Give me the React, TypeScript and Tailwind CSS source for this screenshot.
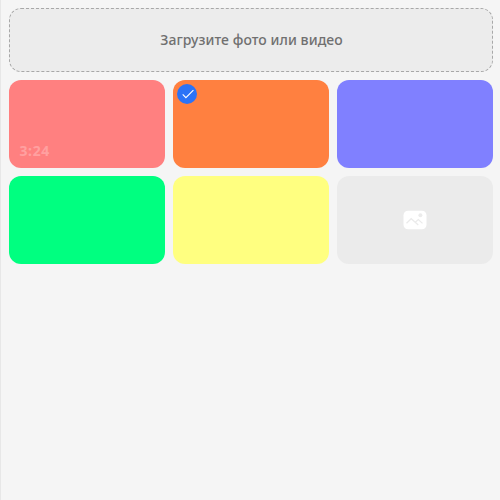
import React from "react";

type Tile = { color: string; duration?: string; selected?: boolean; placeholder?: boolean };

const tiles: Tile[] = [
  { color: "bg-[#ff8080]", duration: "3:24" },
  { color: "bg-[#ff8040]", selected: true },
  { color: "bg-[#8080ff]" },
  { color: "bg-[#00ff80]" },
  { color: "bg-[#ffff80]" },
  { color: "bg-[#ebebeb]", placeholder: true },
];

function CheckBadge() {
  return (
    <span className="absolute left-1 top-1 flex size-5 items-center justify-center rounded-full bg-[#2b73f7]">
      <svg width="20" height="20" viewBox="0 0 20 20" fill="none">
        <path d="M5.7 10.3 8.9 13.7 16.4 6.2" stroke="#ffffff" strokeWidth="1.08" />
      </svg>
    </span>
  );
}

function ImageIcon() {
  return (
    <svg width="24" height="20" viewBox="0 0 24 20" fill="none">
      <rect x="0.5" y="0.8" width="23" height="18.4" rx="4.5" fill="#ffffff" />
      <circle cx="17.4" cy="5.3" r="2" fill="#ebebeb" />
      <path d="M3.5 13.3 8.2 8.7 15.3 15M12.2 12.3 15.3 9.6 19.5 13.4" stroke="#ebebeb" strokeWidth="1.25" />
    </svg>
  );
}

export default function App() {
  return (
    <div className="flex h-[500px] w-[500px] flex-col gap-2 border-l border-[#e7e7e7] bg-[#f5f5f5] py-2 pl-2 pr-[7px] font-['Noto_Sans',sans-serif]">
      <button className="flex h-16 shrink-0 items-center justify-center rounded-xl border border-dashed border-[#a8a8a8] bg-[#ececec] pl-px text-sm font-medium tracking-[0.06px] text-[#707070]">
        Загрузите фото или видео
      </button>
      <div className="grid grid-cols-3 gap-2">
        {tiles.map((tile) => (
          <div key={tile.color} className={`relative flex h-22 items-center justify-center rounded-xl ${tile.color}`}>
            {tile.selected && <CheckBadge />}
            {tile.placeholder && <ImageIcon />}
            {tile.duration && (
              <span className="absolute bottom-2 left-[10.5px] text-sm leading-[18px] font-bold tracking-[0.6px] text-[#ffa0a0]">
                {tile.duration}
              </span>
            )}
          </div>
        ))}
      </div>
    </div>
  );
}
